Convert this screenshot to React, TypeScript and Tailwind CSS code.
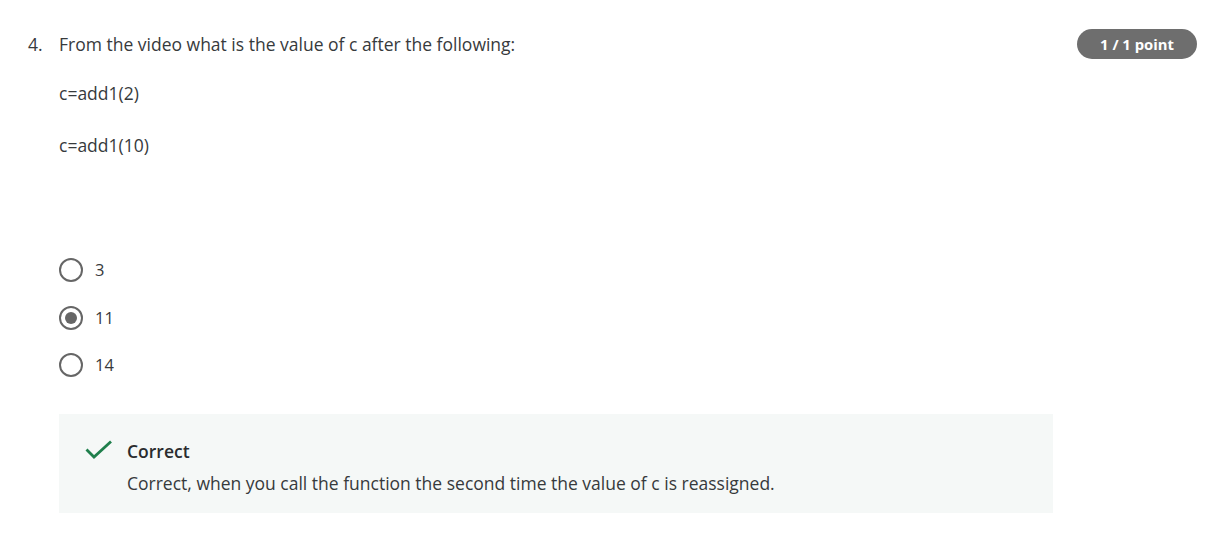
import React from "react"

const options = [
  { label: "3", checked: false },
  { label: "11", checked: true },
  { label: "14", checked: false },
]

function Radio({ checked }: { checked: boolean }) {
  return (
    <span className="flex h-6 w-6 items-center justify-center rounded-full border-2 border-[#666666] bg-white">
      {checked && <span className="h-3 w-3 rounded-full bg-[#666666]" />}
    </span>
  )
}

export default function App() {
  return (
    <div className="h-[538px] w-[1216px] bg-white font-['Open_Sans',sans-serif] text-[#373a3c]">
      <div className="flex pl-[28px] pr-[19px] pt-[32px]">
        {/* Question number */}
        <div className="w-[31px] text-[17.5px] leading-6">4.</div>

        {/* Question body */}
        <div className="flex-1">
          <p className="text-[17.5px] leading-6">From the video what is the value of c after the following:</p>
          <p className="mt-[25px] text-[17.5px] leading-6">c=add1(2)</p>
          <p className="mt-[28px] text-[17.5px] leading-6">c=add1(10)</p>

          <div className="mt-[101px] flex flex-col gap-[23.5px]">
            {options.map((o) => (
              <label key={o.label} className="flex items-center gap-[12px]">
                <Radio checked={o.checked} />
                <span className="text-[16.5px] leading-6">{o.label}</span>
              </label>
            ))}
          </div>

          {/* Feedback */}
          <div className="mt-[37px] flex w-[994px] gap-[14px] bg-[#f5f8f7] pl-[26px] pt-[25px] pb-[18px]">
            <svg width="28" height="20" viewBox="0 0 28 20" className="mt-[1px]">
              <path d="M1.5 9.5 L9 17 L26 1.5" fill="none" stroke="#1f7f4c" strokeWidth="2.8" />
            </svg>
            <div>
              <p className="text-[17.5px] font-semibold leading-6 text-[#2a2c2e]">Correct</p>
              <p className="mt-[8px] text-[17.5px] leading-6">
                Correct, when you call the function the second time the value of c is reassigned.
              </p>
            </div>
          </div>
        </div>

        {/* Score badge */}
        <div className="h-[30px] shrink-0 -mt-[3px]">
          <span className="flex h-[30px] w-[120px] items-center justify-center rounded-full bg-[#6e6e6e] text-[14.8px] font-bold text-white">
            1 / 1 point
          </span>
        </div>
      </div>
    </div>
  )
}
